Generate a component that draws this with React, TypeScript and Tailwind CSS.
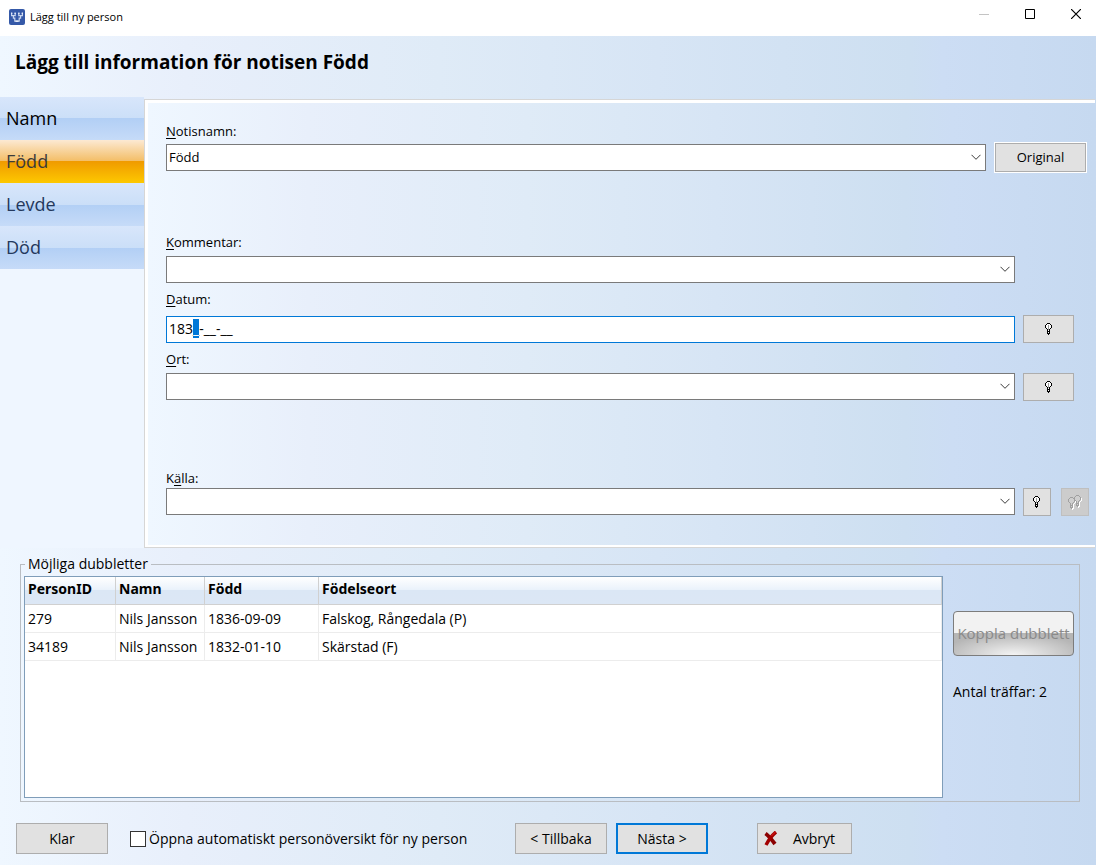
import { useEffect, useRef } from "react";
import type { ReactNode } from "react";
import clsx from "clsx";

const steps = [
    { name: "Namn", done: true },
    { name: "Född", active: true },
    { name: "Levde" },
    { name: "Död" },
];

const duplicates = [
    { id: "279", name: "Nils Jansson", born: "1836-09-09", place: "Falskog, Rångedala (P)" },
    { id: "34189", name: "Nils Jansson", born: "1832-01-10", place: "Skärstad (F)" },
];

// k = outline, w = highlight, g = filament
const bulb = [
    "..kkk..",
    ".kwwwk.",
    "kwwgwwk",
    "kwwgwwk",
    "kwwgwwk",
    ".kwgwk.",
    "..kgk..",
    "..kwk..",
    "..kkk..",
    "..kwk..",
    "..kkk..",
    "...k...",
];

function Pixels({ x = 0, y = 0, colors }: { x?: number; y?: number; colors: Record<string, string> }) {
    return (
        <>
            {bulb.map((row, r) =>
                row
                    .split("")
                    .map((c, i) =>
                        colors[c] ? (
                            <rect key={r + "-" + i} x={x + i} y={y + r} width="1" height="1" fill={colors[c]} />
                        ) : null
                    )
            )}
        </>
    );
}

function Bulb() {
    return (
        <svg width="8" height="12" viewBox="0 0 8 12" shapeRendering="crispEdges" aria-hidden="true">
            <Pixels colors={{ k: "#000", w: "#fff", g: "#9a9a9a" }} />
        </svg>
    );
}

function TwoBulbs() {
    const light = { k: "#fff" };
    const dark = { k: "#a0a0a0", w: "#cfcfcf", g: "#cfcfcf" };
    return (
        <svg width="14" height="15" viewBox="0 0 14 15" shapeRendering="crispEdges" aria-hidden="true">
            <Pixels x={1} y={3} colors={light} />
            <Pixels x={0} y={2} colors={dark} />
            <Pixels x={7} y={1} colors={light} />
            <Pixels x={6} y={0} colors={dark} />
        </svg>
    );
}

function Label({ id, hot, before = "", children, className }: {
    id: string;
    hot: string;
    before?: string;
    children: ReactNode;
    className?: string;
}) {
    return (
        <label htmlFor={id} className={clsx("block w-fit h-5 leading-5", className)}>
            {before}
            <span className="underline underline-offset-2">{hot}</span>
            {children}
        </label>
    );
}

function Combo({ id, value = "" }: { id: string; value?: string }) {
    return (
        <div className="relative flex-1">
            <select
                id={id}
                className="block w-full h-[27px] pl-0.5 pr-6 appearance-none bg-white border border-[#7a7a7a] rounded-none outline-none"
            >
                <option>{value}</option>
            </select>
            <svg
                className="absolute right-[5px] top-[10px] pointer-events-none"
                width="10"
                height="7"
                viewBox="0 0 10 7"
                fill="none"
                stroke="#3a3a3a"
                aria-hidden="true"
            >
                <path d="M0.5 0.8 L5 5.3 L9.5 0.8" />
            </svg>
        </div>
    );
}

function Button({ children, className, ...rest }: React.ComponentProps<"button">) {
    return (
        <button
            type="button"
            className={clsx(
                "flex items-center justify-center bg-[#e1e1e1] border disabled:bg-[#cccccc]",
                className
            )}
            {...rest}
        >
            {children}
        </button>
    );
}

function TitleBar() {
    return (
        <header className="flex items-start justify-between h-9 bg-white text-black">
            <div className="flex items-center gap-[5px] pl-[9px] h-[34px]">
                <svg width="16" height="16" viewBox="0 0 16 16" fill="none" aria-hidden="true">
                    <rect width="16" height="16" rx="2" fill="#3559a8" />
                    <g stroke="#c9d6ee" strokeWidth="1.2">
                        <path d="M2.6 4v2.6h3.6V4M9.8 4v2.6h3.6V4" />
                        <path d="M4.4 6.6v2.6h1.4v3h4.400v-3h1.400V6.600" />
                    </g>
                    <g fill="#e6edf9">
                        <rect x="2" y="3.500" width="1.300" height="1.500" />
                        <rect x="5.500" y="3.500" width="1.300" height="1.500" />
                        <rect x="9.200" y="3.500" width="1.300" height="1.500" />
                        <rect x="12.700" y="3.500" width="1.300" height="1.500" />
                        <rect x="6.500" y="11.500" width="3" height="1.500" />
                    </g>
                </svg>
                <span className="text-[11px]">Lägg till ny person</span>
            </div>
            <div className="flex gap-1.5">
                <button type="button" aria-label="Minimera" className="flex w-10 h-7 items-center justify-center">
                    <svg width="10" height="10" viewBox="0 0 10 10" stroke="#c4c4c4">
                        <path d="M0 5.5h10" />
                    </svg>
                </button>
                <button type="button" aria-label="Maximera" className="flex w-10 h-7 items-center justify-center">
                    <svg width="10" height="10" viewBox="0 0 10 10" fill="none" stroke="#000">
                        <path d="M0.5 0.5h9v9h-9z" />
                    </svg>
                </button>
                <button type="button" aria-label="Stäng" className="flex w-10 h-7 items-center justify-center">
                    <svg width="10" height="10" viewBox="0 0 10 10" stroke="#000" strokeWidth="1.2">
                        <path d="M0 0 L10 10 M10 0 L0 10" />
                    </svg>
                </button>
            </div>
        </header>
    );
}

function Steps() {
    return (
        <nav className="w-36 shrink-0 -mt-0.5 bg-[#eff6ff]">
            {steps.map((step) => (
                <button
                    key={step.name}
                    type="button"
                    className={clsx(
                        "block w-full h-[43px] pl-1.5 text-left text-lg leading-[43px]",
                        step.active
                            ? "bg-[linear-gradient(#fce9d3,#f3bd64_50%,#f09b00_50%,#fdc800)]"
                            : "bg-[linear-gradient(#d8e6fb,#cbdff8_50%,#b2cff5_50%,#c6dbf8)]",
                        step.done ? "text-black" : step.active ? "text-[#3b3b3b]" : "text-[#24385c]"
                    )}
                >
                    {step.name}
                </button>
            ))}
        </nav>
    );
}

function EventForm() {
    const date = useRef<HTMLInputElement>(null);

    // put the cursor on the first missing digit
    useEffect(() => {
        date.current?.focus();
        date.current?.setSelectionRange(3, 4);
    }, []);

    return (
        <form className="flex-1 min-w-0 border-t border-l border-b border-[#d6d6d6] bg-white p-[3px] pr-0 pb-0.5 mr-px text-[13px]">
            <div className="pl-[18px] pr-1.5 pt-[18px] pb-[29px] bg-[linear-gradient(90deg,#eff7ff,#e8effb_17%,#dfebf7_40%,#d7e5f5_60%,#cddff1_80%,#ccddf4_85%,#c6d9f0)]">
                <Label id="notis" hot="N" className="mb-px">
                    otisnamn:
                </Label>
                <div className="flex items-center gap-2">
                    <Combo id="notis" value="Född" />
                    <div className="w-[95px]">
                        <div className="w-[93px] bg-white p-px">
                            <Button className="w-full h-[29px] border-[#adadad]">Original</Button>
                        </div>
                    </div>
                </div>

                <Label id="kommentar" hot="K" className="mt-[59px] mb-1">
                    ommentar:
                </Label>
                <div className="flex h-7 gap-2">
                    <Combo id="kommentar" />
                    <div className="w-[66px]" />
                </div>

                <Label id="datum" hot="D" className="mt-[5px] mb-1.5">
                    atum:
                </Label>
                <div className="flex items-end gap-2">
                    <input
                        id="datum"
                        ref={date}
                        defaultValue="183_-__-__"
                        className="flex-1 min-w-0 h-[27px] pl-0.5 pb-0.5 text-sm bg-white border border-[#0078d7] outline-none selection:bg-[#0078d7] selection:text-white"
                    />
                    <div className="w-[66px]">
                        <Button aria-label="Föreslå datum" className="w-[51px] h-7 border-[#adadad]">
                            <Bulb />
                        </Button>
                    </div>
                </div>

                <Label id="ort" hot="O" className="mt-1.5 mb-1">
                    rt:
                </Label>
                <div className="flex items-start gap-2">
                    <Combo id="ort" />
                    <div className="w-[66px]">
                        <Button aria-label="Föreslå ort" className="w-[51px] h-7 border-[#adadad]">
                            <Bulb />
                        </Button>
                    </div>
                </div>

                <Label id="kalla" before="K" hot="ä" className="mt-[67px]">
                    lla:
                </Label>
                <div className="flex items-start gap-2">
                    <Combo id="kalla" />
                    <div className="flex justify-between w-[66px]">
                        <Button aria-label="Föreslå källa" className="w-7 h-7 border-[#adadad]">
                            <Bulb />
                        </Button>
                        <Button aria-label="Flera källor" disabled className="w-7 h-7 border-[#bfbfbf]">
                            <TwoBulbs />
                        </Button>
                    </div>
                </div>
            </div>
        </form>
    );
}

function Duplicates() {
    return (
        <fieldset className="mt-1.5 ml-5 mr-4 pl-[3px] pr-[5px] pb-[3px] border border-[#b9bdc2]">
            <legend className="ml-px px-[3px] h-5 leading-5 text-sm">Möjliga dubbletter</legend>
            <div className="flex gap-2.5">
                <div className="flex-1 min-w-0 h-[222px] mt-0.5 bg-white border border-[#7f9db9]">
                    <table className="w-full table-fixed border-separate border-spacing-0 text-left text-sm">
                        <thead>
                            <tr className="h-7 font-['Noto_Sans'] leading-5 bg-[linear-gradient(#ffffff,#eaf2fb_45%,#dbe7f5_45%,#dce7f5)]">
                                <th className="w-[91px] pl-[3px] pb-1 border-r border-b border-[#d0d0d0]">PersonID</th>
                                <th className="w-[89px] pl-[3px] pb-1 border-r border-b border-[#d0d0d0]">Namn</th>
                                <th className="w-[114px] pl-[3px] pb-1 border-r border-b border-[#d0d0d0]">Född</th>
                                <th className="pl-[3px] pb-1 border-r border-b border-[#d0d0d0]">Födelseort</th>
                            </tr>
                        </thead>
                        <tbody>
                            {duplicates.map((d) => (
                                <tr key={d.id} className="h-7 whitespace-nowrap">
                                    <td className="pl-[3px] border-r border-b border-[#ececec]">{d.id}</td>
                                    <td className="pl-[3px] border-r border-b border-[#ececec]">{d.name}</td>
                                    <td className="pl-[3px] border-r border-b border-[#ececec]">{d.born}</td>
                                    <td className="pl-[3px] border-r border-b border-[#ececec]">{d.place}</td>
                                </tr>
                            ))}
                        </tbody>
                    </table>
                </div>
                <div className="w-[121px] pt-[37px]">
                    <button
                        type="button"
                        disabled
                        className="w-full h-[45px] rounded border border-[#7c7c7c] text-[15px] text-[#8a8a8a] whitespace-nowrap bg-[linear-gradient(#f2f2f2_50%,transparent_50%),radial-gradient(ellipse_60%_50%_at_50%_100%,#f4f4f4,#b6b6b6)]"
                    >
                        Koppla dubblett
                    </button>
                    <p className="mt-[26px] text-sm">Antal träffar: 2</p>
                </div>
            </div>
        </fieldset>
    );
}

function Footer() {
    return (
        <footer className="flex items-center h-[31px] mt-[21px] mb-[11px] pl-4 text-sm">
            <Button className="w-[92px] h-full border-[#adadad]">Klar</Button>
            <label className="flex items-center gap-[3px] w-[385px] ml-[22px] whitespace-nowrap">
                <input type="checkbox" className="appearance-none w-4 h-4 bg-white border border-[#333]" />
                Öppna automatiskt personöversikt för ny person
            </label>
            <Button className="w-[92px] h-full border-[#adadad]">&lt; Tillbaka</Button>
            <Button className="w-[92px] h-full ml-[9px] border-2 border-[#0078d7]">Nästa &gt;</Button>
            <Button className="w-[95px] h-full ml-[49px] pr-2.5 gap-4 border-[#adadad]">
                <svg width="13" height="15" viewBox="0 0 13 15" fill="none" aria-hidden="true">
                    <path d="M1.5 2.5Q5 5 11 13" stroke="#8b0000" strokeWidth="3.8" />
                    <path d="M12 1Q6 6 2 14" stroke="#a30000" strokeWidth="3.4" />
                    <path d="M11.5 1.2Q9 3 7.5 5" stroke="#e02020" strokeWidth="1" />
                </svg>
                Avbryt
            </Button>
        </footer>
    );
}

export default function App() {
    return (
        <div className="min-h-screen font-['Open_Sans',sans-serif] text-black bg-[linear-gradient(90deg,#eff7ff,#e8effb_17%,#dfebf7_40%,#d7e5f5_60%,#cddff1_83%,#ccddf4_86%,#c6d9f0)]">
            <TitleBar />
            <h1 className="h-[63px] pl-[15px] text-[19px] font-bold leading-[52px]">
                Lägg till information för notisen Född
            </h1>
            <main>
                <div className="flex">
                    <Steps />
                    <EventForm />
                </div>
                <Duplicates />
            </main>
            <Footer />
        </div>
    );
}
